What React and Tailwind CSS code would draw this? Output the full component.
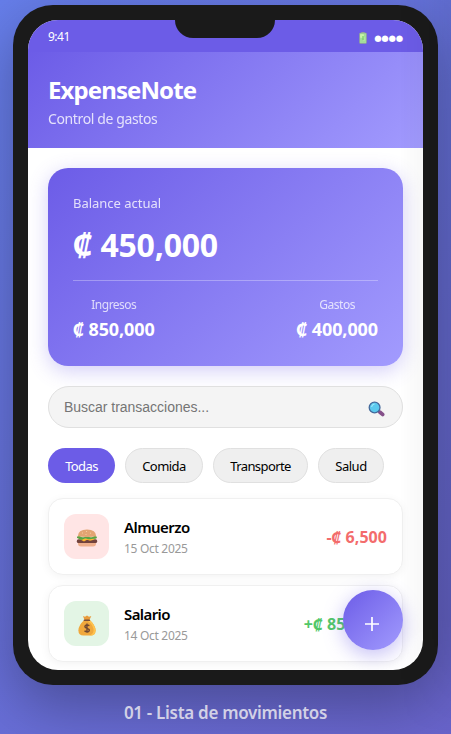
import React from 'react';

function Battery() {
  return (
    <svg className="h-[12px] w-[8px]" viewBox="0 0 8 12">
      <rect x="2.3" y="0" width="3.4" height="2" fill="#9aa9a0" />
      <rect x="0.5" y="1" width="7" height="10.5" rx="0.8" fill="#a3dc9b" stroke="#8f9c95" strokeWidth="0.6" />
      <path d="M1.5 2.5h3v3h-3zM5 5v4" fill="#c8f5a7" stroke="#c8f5a7" strokeWidth="0.7" />
      <path d="M4 4v4" stroke="#75cd66" strokeWidth="1.2" />
    </svg>
  );
}

function Magnifier() {
  return (
    <svg className="h-[16px] w-[17px]" viewBox="0 0 17 16">
      <path d="M10.2 9.7l2 1.8" stroke="#55405f" strokeWidth="2" />
      <path d="M12 11.2l2.6 2.2" stroke="#85508a" strokeWidth="3.8" strokeLinecap="round" />
      <circle cx="6.6" cy="6.5" r="5.4" fill="#5bc9ee" stroke="#44699b" strokeWidth="1.3" />
      <path d="M3.5 5.8Q4.2 3.4 6.5 3" stroke="#9ee9fa" strokeWidth="1.2" fill="none" />
    </svg>
  );
}

function Burger() {
  return (
    <svg className="h-[18px] w-[22px]" viewBox="0 0 22 18">
      <path d="M2 13.2h18v1.3q0 3-3 3H5q-3 0-3-3z" fill="#efb08d" />
      <rect x="0.8" y="10.3" width="20.4" height="3.8" rx="1.7" fill="#73433d" />
      <path d="M2 9.2h18l-3 1.8-3 .8-3-1-3 1.6z" fill="#ffb62e" />
      <path d="M1 7.7q2-1.3 4 0t4 0 4 0 4 0 4 .2q0 2-2 1.8t-4 .4-4-.3-4 .4-4-.3-2-.2z" fill="#57a344" />
      <path d="M1.8 7.2Q2 .5 11 .5t9.2 6.7q-4 .9-9.2.8T1.8 7.2z" fill="#e3a473" />
      <path d="M6 4h1M10 2.5h1M14 4.2h1M9.5 5.5h1" stroke="#f8d1a1" strokeWidth="0.9" />
    </svg>
  );
}

function MoneyBag() {
  return (
    <svg className="h-[21px] w-[18px]" viewBox="0 0 18 21">
      <path d="M5 1l2 .7L9 .4l2 1.3 2.3-.7L11.5 5h-5z" fill="#e99c3d" />
      <path d="M6.2 5h5.6Q17.6 10.5 17.6 15.3 17.6 20.5 12.5 20.5h-7Q.4 20.5.4 15.3.4 10.5 6.2 5z" fill="#f0a83c" />
      <path d="M10 6q6 5 5.5 10-.5 3-4 4.5h2q4-.5 4.1-5.2Q17 10 11.8 5z" fill="#ffc34e" />
      <rect x="5.7" y="4.5" width="6.4" height="1.6" rx="0.7" fill="#7a4f38" />
      <path d="M11.4 10.7Q9 9.3 7.3 10.6 6 12.3 9 13.3q3.2 1 2 2.8-2 1.5-4.5-.2M9 8.5v9.3" stroke="#704831" strokeWidth="1.4" fill="none" />
    </svg>
  );
}

function Transaction({ icon, tint, title, titleClass, date, amount }) {
  return (
    <div className="flex h-[77px] items-center rounded-[15px] border border-[#f0f0f0] bg-white px-[15px] shadow-[0_2px_10px_rgba(0,0,0,0.05)]">
      <div className={`flex size-[45px] items-center justify-center rounded-xl pt-[3px] ${tint}`}>{icon}</div>
      <div className="ml-[15px] flex-1">
        <div className={`h-[22px] whitespace-nowrap text-[15px] leading-[21px] font-semibold text-black ${titleClass}`}>{title}</div>
        <div className="h-[18px] whitespace-nowrap text-[12px] leading-[19px] tracking-[-0.3px] text-[#999]">{date}</div>
      </div>
      {amount}
    </div>
  );
}

export default function App() {
  return (
    <main className="relative flex h-[734px] w-[451px] flex-col items-center overflow-hidden bg-[linear-gradient(135deg,#667eea_0%,#6964cb_100%)] pt-[5px] font-['Noto_Sans',sans-serif]">
      <div className="h-[680px] w-[425px] shrink-0 rounded-[40px] bg-[#1a1a1a] p-[15px] shadow-[0_20px_60px_rgba(0,0,0,0.3)]">
        <div className="relative h-[650px] overflow-hidden rounded-[30px] bg-white">
          <div className="flex h-8 items-center justify-between bg-[#6c5ce7] px-5 text-white">
            <span className="pt-[2px] text-[12px] tracking-[-0.5px]">9:41</span>
            <div className="flex items-center gap-[7px] pt-[3px]">
              <Battery />
              <span className="font-['DejaVu_Sans',sans-serif] text-[8.5px] leading-[10px] tracking-[-0.2px]">●●●●</span>
            </div>
          </div>
          <div className="absolute top-0 left-[147px] h-[18px] w-[100px] rounded-b-[20px] bg-[#1a1a1a]" />

          <header className="h-24 bg-[linear-gradient(135deg,#6c5ce7,#a29bfe)] px-5 pt-[22px] text-white">
            <h1 className="h-[35px] w-fit text-[24px] leading-8 font-bold tracking-[-0.9px]">ExpenseNote</h1>
            <p className="w-fit text-[14px] leading-5 tracking-[-0.38px] opacity-80">Control de gastos</p>
          </header>

          <div className="p-5">
            <section className="h-[198px] rounded-[20px] bg-[linear-gradient(135deg,#6c5ce7,#a29bfe)] p-[25px] text-white shadow-[0_5px_20px_rgba(108,92,231,0.3)]">
              <p className="h-[29px] w-fit text-[13px] leading-5 tracking-[-0.02px] opacity-80">Balance actual</p>
              <p className="h-[58px] w-fit whitespace-nowrap text-[32px] leading-[46px] font-bold tracking-[-0.2px]">₡ 450,000</p>
              <div className="flex justify-between border-t border-white/30 pt-[15px]">
                <div className="text-center">
                  <p className="text-[12px] leading-[18px] tracking-[-0.5px] opacity-75">Ingresos</p>
                  <p className="pt-[3px] text-[18px] leading-6 font-bold tracking-[-0.1px] whitespace-nowrap">₡ 850,000</p>
                </div>
                <div className="text-center">
                  <p className="text-[12px] leading-[18px] tracking-[-0.45px] opacity-75">Gastos</p>
                  <p className="pt-[3px] text-[18px] leading-6 font-bold tracking-[-0.1px] whitespace-nowrap">₡ 400,000</p>
                </div>
              </div>
            </section>

            <div className="mt-5 flex h-[42px] items-center justify-between rounded-full border border-[#e0e0e0] bg-[#f4f4f4] pr-[17px] pl-[15px]">
              <span className="font-['Liberation_Sans',sans-serif] text-[14px] tracking-[-0.02px] text-[#757575]">Buscar transacciones...</span>
              <div className="pt-[3px]"><Magnifier /></div>
            </div>

            <nav className="mt-5 flex h-[35px] gap-[10px] text-[13px] text-black">
              <button className="w-[67px] rounded-full bg-[#6c5ce7] pt-[2px] tracking-[-0.6px] text-white">Todas</button>
              <button className="w-[78px] rounded-full border border-[#e0e0e0] bg-[#efefef] pt-[2px] tracking-[-0.55px]">Comida</button>
              <button className="w-[95px] rounded-full border border-[#e0e0e0] bg-[#efefef] pt-[2px] tracking-[-0.6px]">Transporte</button>
              <button className="w-[66px] rounded-full border border-[#e0e0e0] bg-[#efefef] pt-[2px] tracking-[-0.5px]">Salud</button>
            </nav>

            <div className="mt-[15px] flex flex-col gap-[10px]">
              <Transaction
                icon={<Burger />}
                tint="bg-[#ffe5e5]"
                title="Almuerzo"
                titleClass="tracking-[-0.55px]"
                date="15 Oct 2025"
                amount={<span className="text-[16px] font-bold tracking-[0.05px] whitespace-nowrap text-[#f36c6c]">-₡ 6,500</span>}
              />
              <Transaction
                icon={<MoneyBag />}
                tint="bg-[#e3f5e5]"
                title="Salario"
                titleClass="tracking-[-0.6px]"
                date="14 Oct 2025"
                amount={<span className="text-[16px] font-bold tracking-[0.08px] whitespace-nowrap text-[#51c767]">+₡ 850,000</span>}
              />
            </div>
          </div>
          <button aria-label="+" className="absolute right-5 bottom-5 flex size-[60px] items-center justify-center rounded-full bg-[linear-gradient(135deg,#6c5ce7,#a29bfe)] shadow-[0_5px_20px_rgba(108,92,231,0.4)]">
            <svg className="mt-[7px] ml-[-2px] size-[14px]" viewBox="0 0 14 14">
              <path d="M7 0v14M0 7h14" stroke="white" strokeWidth="1.7" />
            </svg>
          </button>
        </div>
      </div>
      <p className="mt-[15px] text-[17px] leading-[26px] font-semibold tracking-[-0.3px] whitespace-nowrap text-[#d2d1e6]">01 - Lista de movimientos</p>
      <div className="pointer-events-none absolute inset-y-0 right-0 w-[52px] bg-[linear-gradient(90deg,transparent,rgba(0,0,0,0.03)_50%,rgba(0,0,0,0.07))] [mask-image:linear-gradient(black_85%,transparent)]" />
    </main>
  );
}
